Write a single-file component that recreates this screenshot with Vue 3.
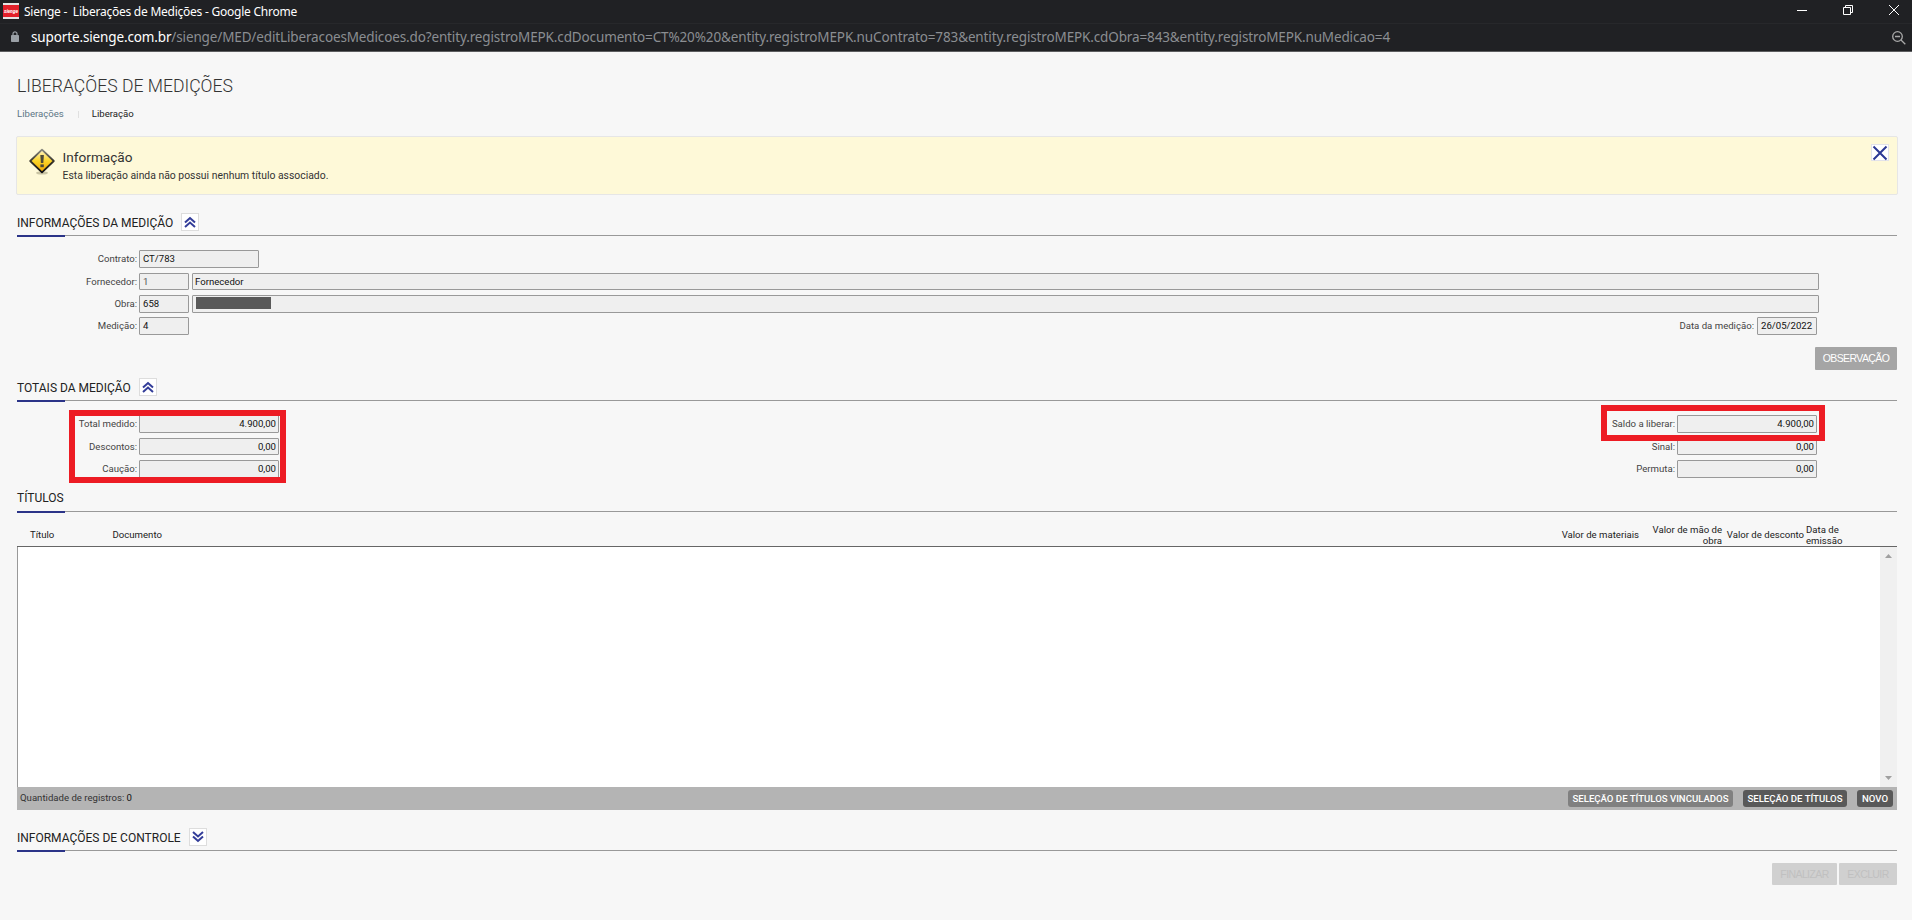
<script setup>
const url = {
  host: 'suporte.sienge.com.br',
  path: '/sienge/MED/editLiberacoesMedicoes.do?entity.registroMEPK.cdDocumento=CT%20%20&entity.registroMEPK.nuContrato=783&entity.registroMEPK.cdObra=843&entity.registroMEPK.nuMedicao=4',
}

const totals = [
  { label: 'Total medido:', value: '4.900,00' },
  { label: 'Descontos:', value: '0,00' },
  { label: 'Caução:', value: '0,00' },
]

const balances = [
  { label: 'Saldo a liberar:', value: '4.900,00' },
  { label: 'Sinal:', value: '0,00' },
  { label: 'Permuta:', value: '0,00' },
]
</script>

<template>
  <div class="window">
    <!-- Title bar -->
    <header class="titlebar">
      <svg class="favicon" viewBox="0 0 16 16">
        <rect width="16" height="16" fill="#e4e4e4" />
        <rect y="2" width="16" height="12" fill="#e2202a" />
        <text x="8" y="9.8" text-anchor="middle" textLength="14">sienge</text>
      </svg>
      <span class="window-title">Sienge -&nbsp; Liberações de Medições - Google Chrome</span>
      <div class="window-controls">
        <svg width="10" height="10" viewBox="0 0 10 10"><path d="M0 5.5h10" /></svg>
        <svg width="10" height="10" viewBox="0 0 10 10"><path d="M.5 2.5h7v7h-7zM2.5 2.5v-2h7v7h-2" /></svg>
        <svg width="10" height="10" viewBox="0 0 10 10"><path d="M0 0l10 10M10 0L0 10" /></svg>
      </div>
    </header>

    <!-- Address bar -->
    <div class="addressbar">
      <svg class="lock" width="8" height="11" viewBox="0 0 8 11">
        <path d="M2 5V2.8a2 2 0 014 0V5" fill="none" stroke="#9aa0a6" stroke-width="1.2" />
        <rect y="4" width="8" height="7" rx="0.8" fill="#9aa0a6" />
      </svg>
      <span class="url"><span class="host">{{ url.host }}</span><span class="path">{{ url.path }}</span></span>
      <svg class="zoom" width="14" height="14" viewBox="0 0 14 14" fill="none" stroke="#a9a9a9" stroke-width="1.3">
        <circle cx="5.5" cy="5.5" r="4.8" />
        <path d="M3 5.5h5M9 9l4.3 4.3" />
      </svg>
    </div>

    <main class="page">
      <h1>LIBERAÇÕES DE MEDIÇÕES</h1>
      <nav class="breadcrumb">
        <a>Liberações</a>
        <i></i>
        <b>Liberação</b>
      </nav>

      <!-- Notice -->
      <div class="alert">
        <svg class="alert-icon" width="28" height="28" viewBox="0 0 28 28">
          <defs>
            <linearGradient id="sign" x1="0" y1="0" x2="0" y2="1">
              <stop offset="0" stop-color="#fff6cc" />
              <stop offset="0.5" stop-color="#fbd428" />
              <stop offset="1" stop-color="#f0a400" />
            </linearGradient>
            <linearGradient id="edge" x1="0" y1="0" x2="0" y2="1">
              <stop offset="0" stop-color="#8a8a80" />
              <stop offset="0.5" stop-color="#38352c" />
              <stop offset="1" stop-color="#111" />
            </linearGradient>
          </defs>
          <ellipse cx="14" cy="25" rx="6" ry="1.6" fill="#c9c4a4" />
          <path d="M14 1.6L25.8 13 14 24.4 2.2 13z" fill="url(#sign)" stroke="url(#edge)" stroke-width="1.8" stroke-linejoin="round" />
          <path d="M12.3 7h3.6l-.6 8h-2.4z" fill="#4d4a3a" />
          <rect x="12.4" y="16.4" width="3.4" height="2.8" fill="#4d4a3a" />
        </svg>
        <div class="alert-body">
          <strong>Informação</strong>
          <p>Esta liberação ainda não possui nenhum título associado.</p>
        </div>
        <button class="alert-close">
          <svg width="16" height="16" viewBox="0 0 16 16"><path d="M1.5 1.5l13 13M14.5 1.5l-13 13" stroke="#2b3894" stroke-width="2" /></svg>
        </button>
      </div>

      <!-- Measurement info -->
      <section class="info">
        <div class="section-head">
          <h2>INFORMAÇÕES DA MEDIÇÃO</h2>
          <button class="toggle">
            <svg width="12" height="12" viewBox="0 0 12 12"><path d="M1 6.5l5-4.5 5 4.5M1 11l5-4.5L11 11" /></svg>
          </button>
        </div>
        <div class="form">
          <div class="row">
            <label>Contrato:</label>
            <span class="field contract">CT/783</span>
          </div>
          <div class="row">
            <label>Fornecedor:</label>
            <span class="field code muted">1</span>
            <span class="field wide">Fornecedor</span>
          </div>
          <div class="row">
            <label>Obra:</label>
            <span class="field code">658</span>
            <span class="field wide"><span class="redacted"></span></span>
          </div>
          <div class="row">
            <label>Medição:</label>
            <span class="field code">4</span>
            <label class="date-label">Data da medição:</label>
            <span class="field date">26/05/2022</span>
          </div>
        </div>
        <div class="actions">
          <button class="btn note">OBSERVAÇÃO</button>
        </div>
      </section>

      <!-- Totals -->
      <section class="totals">
        <div class="section-head">
          <h2>TOTAIS DA MEDIÇÃO</h2>
          <button class="toggle">
            <svg width="12" height="12" viewBox="0 0 12 12"><path d="M1 6.5l5-4.5 5 4.5M1 11l5-4.5L11 11" /></svg>
          </button>
        </div>
        <div class="columns">
          <div class="form">
            <div v-for="item in totals" :key="item.label" class="row">
              <label>{{ item.label }}</label>
              <span class="field amount">{{ item.value }}</span>
            </div>
            <div class="mark mark-totals"></div>
          </div>
          <div class="form">
            <div v-for="item in balances" :key="item.label" class="row">
              <label>{{ item.label }}</label>
              <span class="field amount">{{ item.value }}</span>
            </div>
            <div class="mark mark-balance"></div>
          </div>
        </div>
      </section>

      <!-- Titles table -->
      <section class="titles">
        <div class="section-head">
          <h2>TÍTULOS</h2>
        </div>
        <div class="grid-head">
          <span>Título</span>
          <span>Documento</span>
          <span class="num">Valor de materiais</span>
          <span class="num">Valor de mão de<br />obra</span>
          <span class="num">Valor de desconto</span>
          <span class="issued">Data de<br />emissão</span>
        </div>
        <div class="grid-body">
          <div class="scrollbar">
            <svg width="7" height="4" viewBox="0 0 7 4"><path d="M0 4L3.5 0 7 4z" /></svg>
            <svg width="7" height="4" viewBox="0 0 7 4"><path d="M0 0l3.5 4L7 0z" /></svg>
          </div>
        </div>
        <div class="grid-foot">
          <span class="count">Quantidade de registros: <span>0</span></span>
          <button class="pill linked">SELEÇÃO DE TÍTULOS VINCULADOS</button>
          <button class="pill select">SELEÇÃO DE TÍTULOS</button>
          <button class="pill new">NOVO</button>
        </div>
      </section>

      <!-- Control info -->
      <section class="control">
        <div class="section-head">
          <h2>INFORMAÇÕES DE CONTROLE</h2>
          <button class="toggle">
            <svg width="12" height="12" viewBox="0 0 12 12"><path d="M1 1l5 4.5L11 1M1 5.5L6 10l5-4.5" /></svg>
          </button>
        </div>
        <div class="actions">
          <button class="btn disabled finish">FINALIZAR</button>
          <button class="btn disabled remove">EXCLUIR</button>
        </div>
      </section>
    </main>
  </div>
</template>

<style>
body {
  margin: 0;
  background: #f7f7f7;
}
</style>

<style scoped>
.window {
  width: 100%;
  height: 920px;
  overflow: hidden;
  background: #f7f7f7;
  color: #333;
  font-family: Roboto, "Liberation Sans", sans-serif;
  font-size: 9.6px;
}

.window *,
.window *::after {
  box-sizing: border-box;
}

button {
  margin: 0;
  padding: 0;
  border: 0;
  font-family: inherit;
  white-space: nowrap;
}

svg {
  display: block;
  flex: none;
}

/* Browser chrome */
.titlebar {
  display: flex;
  align-items: center;
  height: 24px;
  padding: 0 13px 0 3px;
  background: #202124;
  border-bottom: 1px solid #27282b;
}

.favicon {
  width: 16px;
  height: 16px;
  margin-top: -1px;
}

.favicon text {
  fill: #fff;
  font-size: 5px;
  font-weight: 700;
  font-style: italic;
}

.window-title {
  margin-left: 5px;
  color: #fff;
  font: 12px/22px "Noto Sans", sans-serif;
  letter-spacing: -0.24px;
}

.window-controls {
  display: flex;
  gap: 36px;
  margin: -4px 0 0 auto;
}

.window-controls path {
  fill: none;
  stroke: #fff;
}

.addressbar {
  display: flex;
  align-items: center;
  height: 28px;
  padding: 0 6px 0 11px;
  background: #202124;
  border-bottom: 1px solid #5d5e60;
}

.lock {
  margin-top: -2px;
}

.url {
  margin: -1px 0 0 12px;
  font: 13.5px/26px "Noto Sans", sans-serif;
  letter-spacing: -0.134px;
  white-space: nowrap;
}

.host {
  color: #fff;
}

.path {
  color: #8b8e92;
}

.zoom {
  margin-left: auto;
}

/* Page */
.page {
  padding: 21px 15px 0 17px;
}

h1 {
  margin: 0;
  font-size: 17.6px;
  font-weight: 300;
  line-height: 26px;
}

.breadcrumb {
  display: flex;
  align-items: center;
  height: 14px;
  margin-top: 8px;
  line-height: 14px;
}

.breadcrumb a {
  color: #5d7686;
}

.breadcrumb i {
  width: 1px;
  height: 7px;
  margin: 0 13px 0 14px;
  background: #e0e0e0;
}

.breadcrumb b {
  color: #222;
  font-weight: 400;
}

.alert {
  display: flex;
  height: 59px;
  margin: 15px -1px 0;
  padding: 11px 8px 0 11px;
  background: #fef9d8;
  border: 1px solid #e6e6e6;
  border-radius: 2px;
}

.alert-body {
  margin-left: 6.6px;
}

.alert-body strong {
  display: block;
  font-size: 13.6px;
  font-weight: 400;
  line-height: 18px;
}

.alert-body p {
  margin: 3px 0 0;
  font-size: 10.4px;
  line-height: 14px;
}

.alert-close {
  width: 18px;
  height: 17px;
  margin: -4px 0 0 auto;
  background: #fff;
  border: 1px solid #e2e2ea;
}

/* Section headings */
.section-head {
  position: relative;
  display: flex;
  gap: 8px;
  height: 23px;
  border-bottom: 1px solid #999;
}

.section-head::after {
  content: "";
  position: absolute;
  left: 0;
  top: 22px;
  width: 48px;
  height: 2px;
  background: #2b3488;
}

h2 {
  margin: 0;
  color: #222;
  font-size: 12px;
  font-weight: 400;
  line-height: 20px;
}

.titles h2 {
  line-height: 18px;
}

.toggle {
  display: flex;
  align-items: center;
  justify-content: center;
  width: 18px;
  height: 18px;
  background: #fff;
  border: 1px solid #ddd;
}

.toggle path {
  fill: none;
  stroke: #333d99;
  stroke-width: 2;
}

/* Forms */
.form {
  position: relative;
  display: grid;
  grid-auto-rows: 17.6px;
  row-gap: 4.73px;
}

.row {
  display: flex;
}

.row label {
  width: 122px;
  padding-right: 2px;
  color: #444;
  line-height: 18px;
  text-align: right;
  white-space: nowrap;
}

.field {
  flex: none;
  height: 17.6px;
  padding: 0 3px;
  background: #efefef;
  border: 1px solid #999;
  border-radius: 1px;
  color: #111;
  line-height: 16px;
  white-space: nowrap;
}

.contract {
  width: 120px;
}

.code {
  width: 50px;
}

.muted {
  color: #555;
}

.wide {
  flex: 1;
  margin: 0 78px 0 3px;
  padding-left: 2px;
}

.redacted {
  display: block;
  width: 75px;
  height: 12px;
  margin: 1px 0 0 1px;
  background: #595959;
}

.row .date-label {
  margin-left: auto;
  padding-right: 3px;
}

.date {
  width: 60px;
  margin-right: 80px;
}

.info {
  height: 165px;
  margin-top: 18px;
}

.info .form {
  padding-top: 14.3px;
}

.actions {
  display: flex;
  justify-content: flex-end;
  gap: 2px;
}

.info .actions {
  margin-top: 12.1px;
}

.btn {
  height: 23px;
  background: #a5a5a5;
  border-radius: 1px;
  color: #fff;
  font: 10.5px/23px "Liberation Sans", sans-serif;
  letter-spacing: -0.6px;
}

.note {
  width: 82px;
}

.totals {
  height: 111px;
}

.columns {
  display: flex;
  justify-content: space-between;
  padding: 14.4px 80px 0 0;
}

.amount {
  width: 140px;
  padding-right: 2px;
  text-align: right;
}

/* Highlight frames over the form values */
.mark {
  position: absolute;
  border: 6px solid #ed1c24;
}

.mark-totals {
  left: 52px;
  top: -5.4px;
  width: 217px;
  height: 73px;
}

.mark-balance {
  right: -8px;
  top: -10.4px;
  width: 224px;
  height: 36px;
}

/* Titles table */
.titles {
  height: 339px;
}

.grid-head {
  display: grid;
  grid-template-columns: 82.5px 1fr 80px 83px 82px 93px;
  align-items: center;
  height: 35px;
  padding: 11px 0 0 13px;
  border-bottom: 1px solid #666;
  color: #222;
  line-height: 11px;
  white-space: nowrap;
}

.num {
  text-align: right;
}

.issued {
  padding-left: 2px;
}

.grid-body {
  display: flex;
  justify-content: flex-end;
  height: 240px;
  background: #fff;
  border-left: 1px solid #999;
}

.scrollbar {
  display: flex;
  flex-direction: column;
  align-items: center;
  justify-content: space-between;
  width: 17px;
  padding: 7px 0;
  background: #f0f0f0;
}

.scrollbar path {
  fill: #a0a0a0;
}

.grid-foot {
  display: flex;
  align-items: center;
  height: 23px;
  padding: 0 4px 0 3px;
  background: #b4b4b4;
}

.count {
  margin: -2px auto 0 0;
  line-height: 20px;
}

.count span {
  color: #111;
}

.pill {
  height: 17px;
  background: #595959;
  border-radius: 3px;
  color: #fff;
  font-size: 9.6px;
  font-weight: 500;
  line-height: 17px;
}

.linked {
  width: 165px;
  background: #808080;
}

.select {
  width: 104px;
  margin: 0 10px;
}

.new {
  width: 36px;
}

.control .actions {
  margin-top: 12px;
}

.disabled {
  height: 22px;
  background: #d0d0d0;
  color: #c0c0c0;
}

.finish {
  width: 65px;
}

.remove {
  width: 58px;
}
</style>
